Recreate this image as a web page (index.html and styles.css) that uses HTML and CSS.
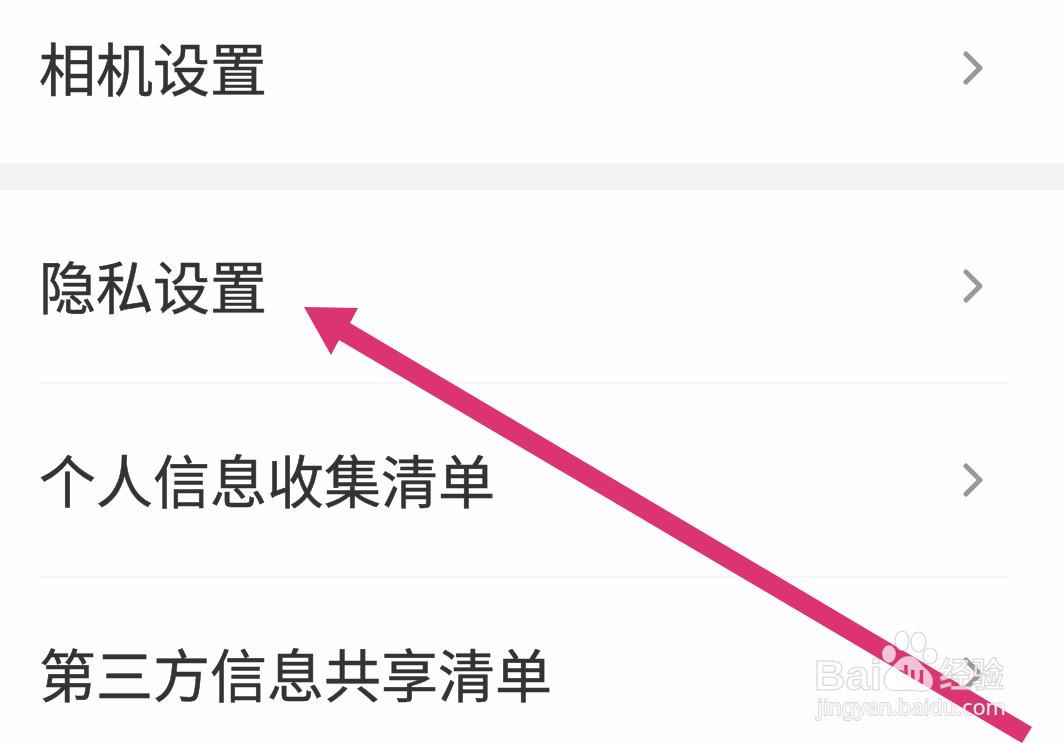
FILE: index.html
```
<!DOCTYPE html>
<html lang="zh-CN">
<head>
  <meta charset="UTF-8">
  <meta name="viewport" content="width=device-width, initial-scale=1.0">
  <title>设置</title>
  <link rel="stylesheet" href="styles.css">
</head>
<body>

  <main class="settings">
    <section class="group group-first">
      <a class="row">
        <span class="label">相机设置</span>
        <svg class="chevron" viewBox="0 0 20 34"><path d="M3 3 L17 17 L3 31"/></svg>
      </a>
    </section>

    <section class="group">
      <a class="row">
        <span class="label">隐私设置</span>
        <svg class="chevron" viewBox="0 0 20 34"><path d="M3 3 L17 17 L3 31"/></svg>
      </a>
      <a class="row">
        <span class="label">个人信息收集清单</span>
        <svg class="chevron" viewBox="0 0 20 34"><path d="M3 3 L17 17 L3 31"/></svg>
      </a>
      <a class="row">
        <span class="label">第三方信息共享清单</span>
        <svg class="chevron" viewBox="0 0 20 34"><path d="M3 3 L17 17 L3 31"/></svg>
      </a>
    </section>
  </main>

  <!-- arrow and watermark lie over the list -->
  <svg class="overlay" viewBox="0 0 1064 745">
    <defs>
      <mask id="paw-text" maskUnits="userSpaceOnUse" x="870" y="620" width="80" height="80">
        <rect x="870" y="620" width="80" height="80" fill="#fff"/>
        <text class="paw-du" x="894" y="684" textLength="31" lengthAdjust="spacingAndGlyphs">du</text>
      </mask>
    </defs>

    <polygon class="arrow" points="304,307 358,308 350,323 1032,727 1022,743 339,340 331,355"/>

    <g class="mark">
      <text class="brand" x="814" y="689.5" textLength="68" lengthAdjust="spacingAndGlyphs">Bai</text>
      <g mask="url(#paw-text)">
        <ellipse cx="889" cy="654" rx="7" ry="9"/>
        <ellipse cx="902" cy="641" rx="7" ry="10"/>
        <ellipse cx="918.5" cy="642" rx="7.5" ry="10"/>
        <ellipse cx="930" cy="656" rx="7" ry="8"/>
        <path d="M909 656 C901 656 898 661 894 665 C888 670 883 675 884 682 C886 693 897 691 909 690 C921 691 931 694 933 683 C934 676 929 671 924 667 C919 662 917 656 909 656 Z"/>
      </g>
      <text class="brand-cn" x="939" y="687" textLength="65" lengthAdjust="spacingAndGlyphs">经验</text>
      <text class="site" x="817" y="715" textLength="189" lengthAdjust="spacingAndGlyphs">jingyan.baidu.com</text>
    </g>
  </svg>

</body>
</html>
```
FILE: styles.css
```
body {
  margin: 0;
  height: 745px;
  overflow: hidden;
  background-color: #fefefe;
  font-family: "Noto Sans CJK SC", "Noto Sans", sans-serif;
}

.settings {
  height: 745px;
  overflow: hidden;
}

.group {
  padding: 0 54px 0 39px;
}

.group-first {
  height: 163px;
  border-bottom: 27px solid #f2f2f2;
}

.row {
  display: flex;
  align-items: center;
  justify-content: space-between;
  box-sizing: border-box;
  height: 194px;
  padding-right: 27px;
  border-bottom: 2px solid #f5f5f5;
  color: #333;
}

.group-first .row {
  height: 136px;
  border-bottom: none;
}

.label {
  padding-bottom: 4px;
  font-size: 57px;
  line-height: 80px;
  -webkit-text-stroke: 0.5px #333;
}

.chevron {
  width: 20px;
  height: 34px;
  fill: none;
  stroke: #999;
  stroke-width: 5;
  stroke-linecap: round;
  stroke-linejoin: round;
}

.overlay {
  position: absolute;
  top: 0;
  left: 0;
  width: 1064px;
  height: 745px;
}

.arrow {
  fill: #dc3372;
}

/* watermark */
.mark {
  fill: rgba(255, 255, 255, 0.7);
  stroke: rgba(120, 120, 120, 0.3);
  stroke-width: 1.2;
}

.brand {
  font-family: "Liberation Sans", Arial, sans-serif;
  font-size: 43px;
  font-weight: bold;
}

.paw-du {
  fill: #000;
  stroke: none;
  font-family: "Liberation Sans", Arial, sans-serif;
  font-size: 26px;
  font-weight: bold;
}

.brand-cn {
  font-size: 34px;
  font-weight: bold;
}

.site {
  font-family: "Noto Sans", sans-serif;
  font-size: 22px;
  fill: rgba(255, 255, 255, 0.9);
  stroke: rgba(120, 120, 120, 0.3);
  stroke-width: 1.8;
  paint-order: stroke;
}
```
